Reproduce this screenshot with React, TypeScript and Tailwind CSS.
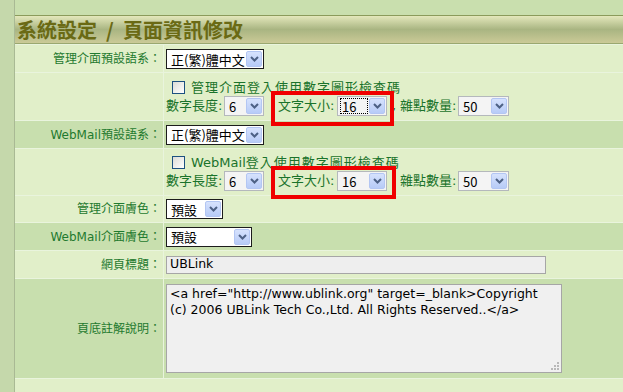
import React from 'react';

const LABEL = "font-['DejaVu_Sans','Noto_Sans_CJK_TC',sans-serif] text-[12px] text-[#1f7a2f]";
const VALUE = "font-['DejaVu_Sans','Noto_Sans_CJK_TC',sans-serif] text-[13px] text-[#1a732b]";

function Chevron() {
    return (
        <svg width="9" height="6" viewBox="0 0 9 6">
            <path d="M1 1l3.5 3.5L8 1" fill="none" stroke="#4d6185" strokeWidth="2" />
        </svg>
    );
}

function Select({ value, width, gray, focus }: { value: string; width: string; gray?: boolean; focus?: boolean }) {
    return (
        <div
            className={`flex h-[20px] shrink-0 items-center ${width} border ${gray ? 'border-[#b4b8bc] bg-[#f4f4f4]' : 'border-[#1c1c1c] bg-white'} font-['Noto_Sans_CJK_TC','DejaVu_Sans',sans-serif] text-[13px] text-black`}
        >
            <div className="flex h-full min-w-0 flex-1 items-center pl-[2px]">
                <span className={`flex h-[16px] flex-1 items-center whitespace-nowrap pl-[1px] leading-none ${focus ? 'border border-dotted border-black' : 'border border-transparent'}`}>
                    {value}
                </span>
            </div>
            <div className="m-[1px] flex h-[16px] w-[16px] shrink-0 items-center justify-center rounded-[2px] border border-[#b3c6f3] bg-gradient-to-b from-[#d6e2fd] to-[#b7cbf7]">
                <Chevron />
            </div>
        </div>
    );
}

function Checkbox() {
    return <span className="inline-block h-[13px] w-[13px] shrink-0 border border-[#1c5180] bg-gradient-to-br from-[#dcdcd7] to-white" />;
}

function Row({ label, dark, h, children }: { label?: string; dark?: boolean; h: string; children?: React.ReactNode }) {
    return (
        <div className={`flex ${h} border-t border-[#e9f4dd] ${dark ? 'bg-[#c8dfae]' : 'bg-[#e1efc9]'}`}>
            <div className={`flex w-[149px] shrink-0 items-center justify-end border-r border-[#e9f4dd] pr-[2px] ${LABEL}`}>
                {label}
            </div>
            <div className="flex-1 pl-[2px]">{children}</div>
        </div>
    );
}

function CaptchaGroup({ prefix, text, box }: { prefix?: string; text: string; box: string }) {
    return (
        <div className={VALUE}>
            <div className="flex h-[17px] items-center pl-[6px]">
                <Checkbox />
                <span className="ml-[6px] leading-none">
                    {prefix && <span className="tracking-normal">{prefix}</span>}
                    <span className="tracking-[1px]">{text}</span>
                </span>
            </div>
            <div className="flex h-[20px] items-center">
                <span className="w-[58px]">數字長度:</span>
                <Select value="6" width="w-[40px]" gray />
                <div className="relative ml-[14px] flex items-center">
                    <span className="w-[59px]">文字大小:</span>
                    <Select value="16" width="w-[50px]" gray focus={box === 'a'} />
                    <span
                        className={`absolute border-[4px] border-[#f00000] ${box === 'a' ? '-left-[7px] -right-[7px] -top-[5px] -bottom-[10px]' : '-left-[7px] -right-[9px] -top-[5px] -bottom-[8px]'}`}
                    />
                </div>
                <span className="ml-[5px] w-[8px]">,</span>
                <span className="w-[58px]">雜點數量:</span>
                <Select value="50" width="w-[51px]" gray />
            </div>
        </div>
    );
}

export default function App() {
    return (
        <div className="flex h-[392px] w-[623px] overflow-hidden bg-[#c9dfae]">
            <div className="w-[15px] shrink-0 border-r border-[#a9b994] bg-[#c5d8ab]" />
            <div className="flex flex-1 flex-col">
                <div className="h-[15px] shrink-0" />
                {/* title bar */}
                <div className="flex h-[29px] shrink-0 items-center border-t border-b border-t-[#8b9b5c] border-b-[#9aa870] bg-gradient-to-b from-[#e4e8bc] via-[#a9b582] to-[#cbca97] pl-[2px]">
                    <span className="whitespace-pre font-['Noto_Sans_CJK_TC',sans-serif] text-[20px] font-bold leading-none text-[#6a6a14]">
                        系統設定{'  /  '}頁面資訊修改
                    </span>
                </div>

                <Row label="管理介面預設語系：" h="h-[28px]">
                    <div className="flex h-full items-center pt-[1px]">
                        <Select value="正(繁)體中文" width="w-[98px]" />
                    </div>
                </Row>
                <Row h="h-[48px]">
                    <div className="pt-[6px]">
                        <CaptchaGroup text="管理介面登入使用數字圖形檢查碼" box="a" />
                    </div>
                </Row>
                <Row label="WebMail預設語系：" dark h="h-[28px]">
                    <div className="flex h-full items-center">
                        <Select value="正(繁)體中文" width="w-[98px]" />
                    </div>
                </Row>
                <Row h="h-[47px]">
                    <div className="pt-[5px]">
                        <CaptchaGroup prefix="WebMail" text="登入使用數字圖形檢查碼" box="b" />
                    </div>
                </Row>
                <Row label="管理介面膚色：" h="h-[27px]">
                    <div className="flex h-full items-center">
                        <Select value="預設" width="w-[57px]" />
                    </div>
                </Row>
                <Row label="WebMail介面膚色：" dark h="h-[28px]">
                    <div className="flex h-full items-center">
                        <Select value="預設" width="w-[86px]" />
                    </div>
                </Row>
                <Row label="網頁標題：" h="h-[28px]">
                    <div className="flex h-full items-center">
                        <div className="flex h-[18px] w-[380px] items-center border border-[#a6a6a6] bg-[#eeeeee] pl-[3px] font-['DejaVu_Sans',sans-serif] text-[12.5px] text-black">
                            UBLink
                        </div>
                    </div>
                </Row>
                <Row label="頁底註解說明：" dark h="h-[100px]">
                    <div className="flex h-full items-center">
                        <div className="relative h-[89px] w-[396px] border border-[#a6a6a6] bg-[#f0f0f0] px-[3px] pt-[1px] font-['DejaVu_Sans',sans-serif] text-[12.5px] leading-[16px] text-black">
                            &lt;a href="http://www.ublink.org" target=_blank&gt;Copyright
                            <br />
                            (c) 2006 UBLink Tech Co.,Ltd. All Rights Reserved..&lt;/a&gt;
                            <svg className="absolute bottom-[1px] right-[1px]" width="10" height="10" viewBox="0 0 10 10">
                                <g fill="#b8b8b8">
                                    <rect x="7" y="1" width="2" height="2" />
                                    <rect x="4" y="4" width="2" height="2" />
                                    <rect x="7" y="4" width="2" height="2" />
                                    <rect x="1" y="7" width="2" height="2" />
                                    <rect x="4" y="7" width="2" height="2" />
                                    <rect x="7" y="7" width="2" height="2" />
                                </g>
                            </svg>
                        </div>
                    </div>
                </Row>
                <div className="flex-1 border-t border-[#e9f4dd] bg-[#e1efc9]" />
            </div>
        </div>
    );
}
